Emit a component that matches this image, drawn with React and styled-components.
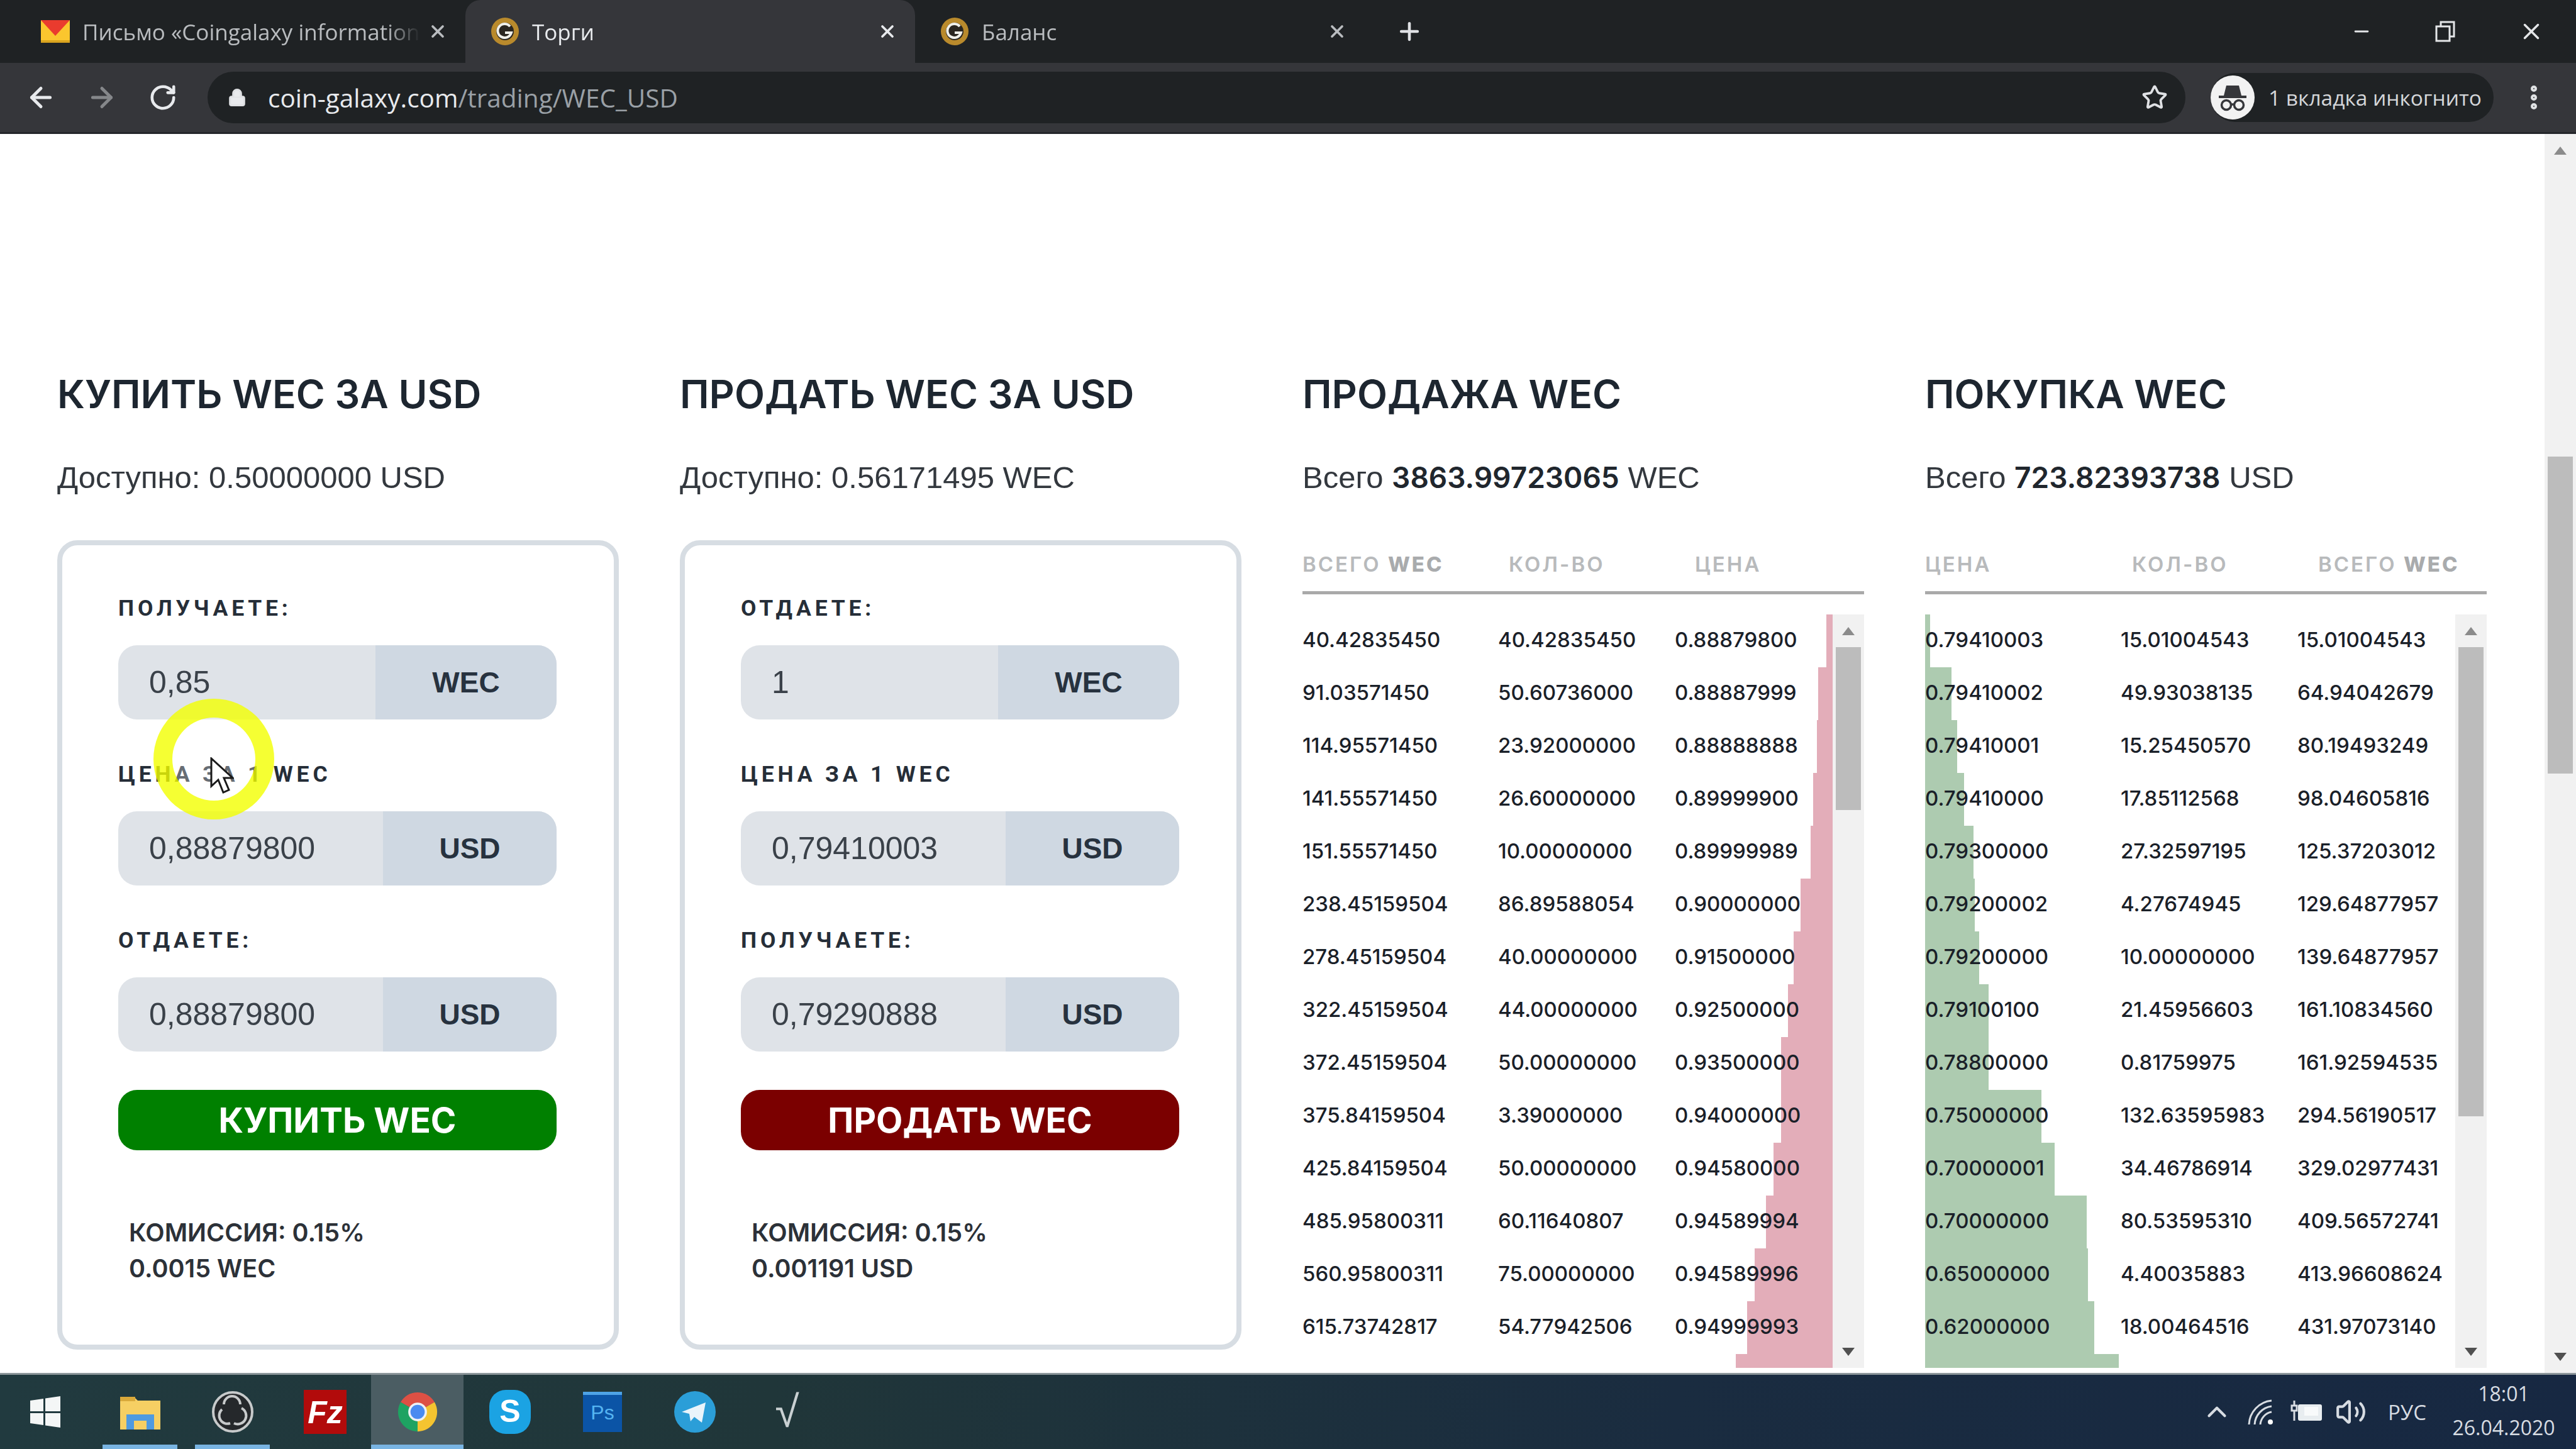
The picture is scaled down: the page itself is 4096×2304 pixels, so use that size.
import styled, { createGlobalStyle } from "styled-components";
import { ArrowLeft, ArrowRight, RotateCw, Lock, Star, X, Plus, Minus, MoreVertical, ChevronUp, Volume2 } from "lucide-react";

const GlobalStyle = createGlobalStyle`
  html, body {
    margin: 0;
    padding: 0;
    background: #fff;
    overflow: hidden;
  }
  * { box-sizing: border-box; }
`;

const Screen = styled.div`
  position: relative;
  width: 4096px;
  height: 2304px;
  display: flex;
  flex-direction: column;
  overflow: hidden;
  font-family: "Liberation Sans", Arial, sans-serif;
  background: #fff;
`;

/* browser chrome */
const TabStrip = styled.div`
  height: 100px;
  flex: none;
  display: flex;
  padding-left: 25px;
  background: #1f2224;
`;

const Tab = styled.div`
  width: 715px;
  height: 100px;
  display: flex;
  align-items: center;
  padding: 0 28px 0 40px;
  border-radius: 24px 24px 0 0;
  background: ${(p) => (p.$active ? "#35363a" : "transparent")};
  color: ${(p) => (p.$active ? "#e8eaed" : "#b9bcbf")};
`;

const Favicon = styled.svg`
  width: 46px;
  height: 46px;
  flex: none;
`;

const TabTitle = styled.span`
  flex: 1;
  margin: 0 12px 0 20px;
  font-family: "Open Sans", sans-serif;
  font-size: 35px;
  white-space: nowrap;
  overflow: hidden;
  -webkit-mask-image: linear-gradient(to right, #000 90%, transparent 100%);
`;

const NewTab = styled.div`
  width: 142px;
  height: 100px;
  display: flex;
  align-items: center;
  justify-content: center;
  color: #dfe1e4;
`;

const WindowControls = styled.div`
  margin-left: auto;
  display: flex;
  align-items: center;
  gap: 100px;
  padding-right: 50px;
  color: #e4e6e8;
`;

const Toolbar = styled.div`
  height: 113px;
  flex: none;
  display: flex;
  align-items: center;
  padding: 0 0 0 16px;
  background: #35363a;
  border-bottom: 3px solid #24262a;
  color: #dfe1e4;
`;

const NavButton = styled.div`
  width: 97px;
  display: flex;
  justify-content: center;
  color: ${(p) => (p.$muted ? "#85878a" : "#e8eaed")};
`;

const AddressBar = styled.div`
  flex: none;
  width: 3145px;
  height: 82px;
  margin-left: 23px;
  padding: 0 28px 0 32px;
  display: flex;
  align-items: center;
  border-radius: 41px;
  background: #1f2224;
`;

const UrlText = styled.span`
  margin-left: 34px;
  font-family: "Open Sans", sans-serif;
  font-size: 40.5px;
  color: #e8eaed;
  & > span { color: #9aa0a6; }
`;

const BookmarkStar = styled(Star)`
  margin-left: auto;
`;

const ProfilePill = styled.div`
  width: 450px;
  height: 78px;
  margin-left: 40px;
  display: flex;
  align-items: center;
  gap: 22px;
  border-radius: 39px;
  background: #1f2224;
  font-family: "Open Sans", sans-serif;
  font-size: 33.5px;
  font-weight: 500;
  color: #d4d6d9;
  white-space: nowrap;
`;

const MenuButton = styled.div`
  margin-left: 40px;
  display: flex;
  color: #e0e2e4;
`;

/* page */
const Viewport = styled.div`
  flex: 1;
  min-height: 0;
  display: flex;
  background: #fff;
`;

const Columns = styled.main`
  flex: 1;
  display: grid;
  grid-template-columns: repeat(4, 893px);
  column-gap: 97px;
  padding: 373px 0 0 91px;
  overflow: hidden;
`;

const Column = styled.section`
  display: flex;
  flex-direction: column;
  min-height: 0;
`;

const Title = styled.h2`
  margin: 0;
  height: 80px;
  line-height: 80px;
  font-family: Inter, sans-serif;
  font-size: 62.5px;
  font-weight: 600;
  color: #1d2630;
  white-space: nowrap;
`;

const Balance = styled.p`
  margin: 63px 0 0;
  height: 60px;
  line-height: 60px;
  font-size: 49px;
  color: #33383e;
  white-space: nowrap;
  & > b {
    font-family: Inter, sans-serif;
    font-size: 46px;
    font-weight: 600;
    color: #20262d;
  }
`;

const Card = styled.div`
  margin-top: 70px;
  width: 893px;
  height: 1287px;
  padding: 80px 91px 0 89px;
  border: 8px solid #d7dde3;
  border-radius: 32px;
  background: #fff;
`;

const FieldLabel = styled.div`
  height: 40px;
  line-height: 40px;
  font-family: Roboto, sans-serif;
  font-size: 35.5px;
  font-weight: 700;
  letter-spacing: 5.8px;
  color: #262e38;
  white-space: nowrap;
`;

const Field = styled.div`
  display: flex;
  height: 118px;
  margin: 39px 0 67px;
  border-radius: 30px;
  overflow: hidden;
  background: #dfe3e8;
`;

const FieldValue = styled.div`
  flex: 1;
  display: flex;
  align-items: center;
  padding-left: 49px;
  font-size: 50px;
  color: #3a4149;
`;

const FieldUnit = styled.div`
  width: ${(p) => (p.$wide ? "276px" : "288px")};
  display: flex;
  align-items: center;
  justify-content: center;
  background: #cfd8e2;
  font-size: 46px;
  font-weight: 700;
  color: #27323f;
`;

const SubmitButton = styled.button`
  display: block;
  width: 100%;
  height: 96px;
  margin-top: -6px;
  border: 0;
  border-radius: 30px;
  background: ${(p) => (p.$sell ? "#7b0000" : "#008000")};
  font-family: Inter, sans-serif;
  font-size: 55px;
  font-weight: 700;
  color: #fff;
`;

const Fee = styled.div`
  margin: 103px 0 0 17px;
  line-height: 57px;
  font-family: Inter, sans-serif;
  font-size: 39.5px;
  font-weight: 600;
  color: #2c3138;
  white-space: nowrap;
`;

/* order book */
const BookHead = styled.div`
  display: grid;
  grid-template-columns: ${(p) => p.$cols};
  height: 68px;
  margin-top: 88px;
  line-height: 40px;
  border-bottom: 5px solid #a9a9a9;
  font-family: Inter, sans-serif;
  font-size: 33px;
  font-weight: 600;
  letter-spacing: 3px;
  color: #b8babc;
  white-space: nowrap;
  & b { font-weight: 800; color: #a9abad; }
`;

const BookBody = styled.div`
  display: flex;
  height: 1198px;
  margin-top: 32px;
  overflow: hidden;
`;

const BookRows = styled.div`
  position: relative;
  flex: 1;
`;

const DepthLayer = styled.div`
  position: absolute;
  inset: 0;
  display: flex;
  flex-direction: column;
  align-items: ${(p) => (p.$side === "sell" ? "flex-end" : "flex-start")};
`;

const DepthBar = styled.div`
  flex: none;
  height: 84px;
  background: ${(p) => (p.$side === "sell" ? "#e3adb9" : "#adcbb0")};
`;

const RowList = styled.div`
  position: relative;
  display: flex;
  flex-direction: column;
  gap: 8px;
  padding-top: 2px;
`;

const BookRow = styled.div`
  display: grid;
  grid-template-columns: 311px 281px 1fr;
  height: 76px;
  align-items: center;
  font-family: Inter, sans-serif;
  font-size: 33px;
  font-weight: 550;
  color: #1a2028;
  white-space: nowrap;
`;

const ScrollTrack = styled.div`
  flex: none;
  width: 50px;
  height: 100%;
  display: flex;
  flex-direction: column;
  align-items: center;
  background: #f1f1f1;
`;

const ScrollArrow = styled.div`
  flex: none;
  height: 52px;
  display: flex;
  align-items: center;
  justify-content: center;
  margin-top: ${(p) => (p.$down ? "auto" : "0")};
  &::before {
    content: "";
    border-left: 10px solid transparent;
    border-right: 10px solid transparent;
    border-bottom: ${(p) => (p.$down ? "0" : "13px solid #8b8b8b")};
    border-top: ${(p) => (p.$down ? "13px solid #505050" : "0")};
  }
`;

const ScrollThumb = styled.div`
  flex: none;
  width: 40px;
  height: ${(p) => p.$height}px;
  margin-top: ${(p) => p.$offset}px;
  background: #bcbcbc;
`;

/* cursor highlight from the screen recorder */
const CursorRing = styled.div`
  position: absolute;
  left: 244px;
  top: 1111px;
  width: 192px;
  height: 192px;
  border: 30px solid rgba(242, 255, 0, 0.8);
  border-radius: 50%;
  background-clip: padding-box;
  background-color: rgba(255, 255, 255, 0.3);
`;

const CursorArrow = styled.svg`
  position: absolute;
  left: 334px;
  top: 1204px;
  width: 38px;
  height: 58px;
`;

/* taskbar */
const Taskbar = styled.footer`
  height: 121px;
  flex: none;
  display: flex;
  align-items: stretch;
  border-top: 3px solid #8d979b;
  background: linear-gradient(to right, #213a3f 0%, #203639 30%, #1a2c40 65%, #172842 100%);
`;

const StartCell = styled.div`
  width: 149px;
  display: flex;
  align-items: center;
  justify-content: center;
  padding-right: 6px;
`;

const TaskCell = styled.div`
  position: relative;
  width: 147px;
  display: flex;
  align-items: center;
  justify-content: center;
  background: ${(p) => (p.$active ? "#4b5d63" : "transparent")};
  &::after {
    content: "";
    display: ${(p) => (p.$open ? "block" : "none")};
    position: absolute;
    bottom: 0;
    left: ${(p) => (p.$active ? "0" : "14px")};
    right: ${(p) => (p.$active ? "0" : "14px")};
    height: 7px;
    background: #79b4e2;
  }
`;

const BadgeGlyph = styled.span`
  font-family: "Liberation Sans", sans-serif;
  font-size: 70px;
  color: #c9d0d2;
`;

const Tray = styled.div`
  margin-left: auto;
  display: flex;
  align-items: center;
  color: #d7dce2;
`;

const TrayItem = styled.div`
  width: 71px;
  display: flex;
  justify-content: center;
`;

const TrayLang = styled.span`
  margin-left: 23px;
  font-family: "Open Sans", sans-serif;
  font-size: 33px;
`;

const Clock = styled.div`
  width: 190px;
  margin: 0 20px 4px 28px;
  font-family: "Open Sans", sans-serif;
  font-size: 32px;
  line-height: 54px;
  text-align: center;
  white-space: nowrap;
`;

const sellRows = [
  ["40.42835450", "40.42835450", "0.88879800"],
  ["91.03571450", "50.60736000", "0.88887999"],
  ["114.95571450", "23.92000000", "0.88888888"],
  ["141.55571450", "26.60000000", "0.89999900"],
  ["151.55571450", "10.00000000", "0.89999989"],
  ["238.45159504", "86.89588054", "0.90000000"],
  ["278.45159504", "40.00000000", "0.91500000"],
  ["322.45159504", "44.00000000", "0.92500000"],
  ["372.45159504", "50.00000000", "0.93500000"],
  ["375.84159504", "3.39000000", "0.94000000"],
  ["425.84159504", "50.00000000", "0.94580000"],
  ["485.95800311", "60.11640807", "0.94589994"],
  ["560.95800311", "75.00000000", "0.94589996"],
  ["615.73742817", "54.77942506", "0.94999993"],
];

const buyRows = [
  ["0.79410003", "15.01004543", "15.01004543"],
  ["0.79410002", "49.93038135", "64.94042679"],
  ["0.79410001", "15.25450570", "80.19493249"],
  ["0.79410000", "17.85112568", "98.04605816"],
  ["0.79300000", "27.32597195", "125.37203012"],
  ["0.79200002", "4.27674945", "129.64877957"],
  ["0.79200000", "10.00000000", "139.64877957"],
  ["0.79100100", "21.45956603", "161.10834560"],
  ["0.78800000", "0.81759975", "161.92594535"],
  ["0.75000000", "132.63595983", "294.56190517"],
  ["0.70000001", "34.46786914", "329.02977431"],
  ["0.70000000", "80.53595310", "409.56572741"],
  ["0.65000000", "4.40035883", "413.96608624"],
  ["0.62000000", "18.00464516", "431.97073140"],
];

const sellDepth = [10, 23, 25, 31, 35, 51, 62, 71, 82, 82, 94, 106, 124, 136, 154];
const buyDepth = [8, 42, 51, 62, 77, 79, 86, 101, 101, 185, 206, 257, 259, 269, 308];

function MailIcon() {
  return (
    <Favicon viewBox="0 0 46 46">
      <rect x="0" y="5" width="46" height="36" fill="#fbc62e" />
      <path d="M0 5h46L23 30z" fill="#ea3b2e" />
      <rect x="0" y="37" width="46" height="4" fill="#d9a31f" />
    </Favicon>
  );
}

function CoinIcon() {
  return (
    <Favicon viewBox="0 0 46 46">
      <circle cx="23" cy="23" r="22" fill="#b98a2c" />
      <circle cx="23" cy="23" r="14" fill="#2a2620" />
      <path d="M31 15a11 11 0 1 0 2 10H23" fill="none" stroke="#f0f0ea" strokeWidth="4" />
    </Favicon>
  );
}

function RestoreIcon() {
  return (
    <svg width="32" height="34" viewBox="0 0 32 34" fill="none" stroke="currentColor" strokeWidth="3">
      <rect x="2" y="9" width="21" height="23" />
      <path d="M9 9V2h21v23h-7" />
    </svg>
  );
}

function IncognitoAvatar() {
  return (
    <svg width="70" height="70" viewBox="0 0 70 70">
      <circle cx="35" cy="35" r="35" fill="#f2f2f2" />
      <path d="M25 16h20l4 16H21z" fill="#35363a" />
      <rect x="13" y="32" width="44" height="4" fill="#35363a" />
      <g fill="none" stroke="#35363a" strokeWidth="3.5">
        <circle cx="25" cy="47" r="7.5" />
        <circle cx="45" cy="47" r="7.5" />
        <path d="M32 46h6" />
      </g>
    </svg>
  );
}

function Scrollbar({ thumbHeight, thumbOffset = 0 }) {
  return (
    <ScrollTrack>
      <ScrollArrow />
      <ScrollThumb $height={thumbHeight} $offset={thumbOffset} />
      <ScrollArrow $down />
    </ScrollTrack>
  );
}

function TradeCard({ fields, action, sell, fee }) {
  return (
    <Card>
      {fields.map((f) => (
        <div key={f.label}>
          <FieldLabel>{f.label}</FieldLabel>
          <Field>
            <FieldValue>{f.value}</FieldValue>
            <FieldUnit $wide={f.unit === "USD"}>{f.unit}</FieldUnit>
          </Field>
        </div>
      ))}
      <SubmitButton $sell={sell}>{action}</SubmitButton>
      <Fee>
        КОМИССИЯ: 0.15%
        <br />
        {fee}
      </Fee>
    </Card>
  );
}

function OrderBook({ side, head, cols, rows, depth, thumbHeight }) {
  return (
    <>
      <BookHead $cols={cols}>{head}</BookHead>
      <BookBody>
        <BookRows>
          <DepthLayer $side={side}>
            {depth.map((w, i) => (
              <DepthBar key={i} $side={side} style={{ width: w }} />
            ))}
          </DepthLayer>
          <RowList>
            {rows.map((r) => (
              <BookRow key={r[2]}>
                <span>{r[0]}</span>
                <span>{r[1]}</span>
                <span>{r[2]}</span>
              </BookRow>
            ))}
          </RowList>
        </BookRows>
        <Scrollbar thumbHeight={thumbHeight} />
      </BookBody>
    </>
  );
}

function Windows() {
  return (
    <svg width="48" height="50" viewBox="0 0 48 50" fill="#f4f6f6">
      <path d="M0 7l21-3v20H0zM24 3.500L48 0v24H24zM0 27h21v19L0 43zM24 27h24v23l-24-3.500z" />
    </svg>
  );
}

function Folder() {
  return (
    <svg width="64" height="56" viewBox="0 0 64 56">
      <path d="M0 4h22l6 6h36v46H0z" fill="#f6cf63" />
      <rect x="0" y="4" width="24" height="7" fill="#d9a93a" />
      <path d="M10 56V32h44v24H42V42H22v14z" fill="#4f9ae0" />
    </svg>
  );
}

function Obs() {
  return (
    <svg width="68" height="68" viewBox="0 0 68 68">
      <circle cx="34" cy="34" r="31" fill="#25282b" stroke="#c7cacb" strokeWidth="4" />
      <g fill="none" stroke="#c7cacb" strokeWidth="4">
        <path d="M20 22a13 13 0 0 1 26 0" />
        <path d="M48 28a13 13 0 0 1-12 24" />
        <path d="M30 52a13 13 0 0 1-13-22" />
      </g>
    </svg>
  );
}

function FileZilla() {
  return (
    <svg width="68" height="70" viewBox="0 0 68 70">
      <rect width="68" height="70" fill="#b20b0b" />
      <text x="34" y="53" textAnchor="middle" fontFamily="Liberation Sans, sans-serif" fontWeight="700" fontStyle="italic" fontSize="50" fill="#fff">Fz</text>
    </svg>
  );
}

function Chrome() {
  return (
    <svg width="68" height="68" viewBox="0 0 48 48">
      <path d="M24 24L5 13A22 22 0 0 1 43 13z" fill="#dd5044" />
      <path d="M24 24L43 13A22 22 0 0 1 24 46z" fill="#f4c430" />
      <path d="M24 24L24 46A22 22 0 0 1 5 13z" fill="#1ea362" />
      <circle cx="24" cy="24" r="10.500" fill="#eef1f4" />
      <circle cx="24" cy="24" r="8" fill="#4a8bf0" />
    </svg>
  );
}

function Skype() {
  return (
    <svg width="66" height="70" viewBox="0 0 66 70">
      <rect width="66" height="70" rx="26" fill="#1ba3e3" />
      <text x="33" y="51" textAnchor="middle" fontFamily="Liberation Sans, sans-serif" fontWeight="700" fontSize="50" fill="#fff">S</text>
    </svg>
  );
}

function Photoshop() {
  return (
    <svg width="62" height="64" viewBox="0 0 62 64">
      <rect width="62" height="64" fill="#0b54a6" />
      <rect width="62" height="5" fill="#4ea3e6" />
      <text x="31" y="44" textAnchor="middle" fontFamily="Liberation Sans, sans-serif" fontSize="32" fill="#55b4f2">Ps</text>
    </svg>
  );
}

function Telegram() {
  return (
    <svg width="66" height="66" viewBox="0 0 66 66">
      <circle cx="33" cy="33" r="33" fill="#2b9ed8" />
      <path d="M12 33l38-15-6 32-12-9-6 7-2-12z" fill="#e9f4fb" />
    </svg>
  );
}

function Wifi() {
  return (
    <svg width="44" height="44" viewBox="0 0 44 44" fill="none" stroke="currentColor" strokeWidth="3">
      <path d="M2 42A40 40 0 0 1 38 4" />
      <path d="M11 42A31 31 0 0 1 38 13" />
      <path d="M20 42A22 22 0 0 1 38 22" />
      <circle cx="36" cy="38" r="4" fill="#fff" stroke="none" />
    </svg>
  );
}

function Battery() {
  return (
    <svg width="54" height="44" viewBox="0 0 54 44">
      <rect x="14" y="10" width="38" height="26" rx="3" fill="#e8edf0" />
      <path d="M8 4v8M4 12h8v8H4zM8 20v16" fill="none" stroke="#d7dce2" strokeWidth="3" />
      <rect x="24" y="14" width="22" height="14" fill="#f8fafb" />
    </svg>
  );
}

export default function App() {
  return (
    <Screen>
      <GlobalStyle />
      <TabStrip>
        <Tab>
          <MailIcon />
          <TabTitle>Письмо «Coingalaxy information</TabTitle>
          <X size={32} strokeWidth={2.8} />
        </Tab>
        <Tab $active>
          <CoinIcon />
          <TabTitle>Торги</TabTitle>
          <X size={32} strokeWidth={2.8} />
        </Tab>
        <Tab>
          <CoinIcon />
          <TabTitle>Баланс</TabTitle>
          <X size={32} strokeWidth={2.8} />
        </Tab>
        <NewTab>
          <Plus size={44} strokeWidth={2.5} />
        </NewTab>
        <WindowControls>
          <Minus size={34} strokeWidth={2} />
          <RestoreIcon />
          <X size={42} strokeWidth={2} />
        </WindowControls>
      </TabStrip>

      <Toolbar>
        <NavButton>
          <ArrowLeft size={50} strokeWidth={2.4} />
        </NavButton>
        <NavButton $muted>
          <ArrowRight size={50} strokeWidth={2.4} />
        </NavButton>
        <NavButton>
          <RotateCw size={46} strokeWidth={2.4} />
        </NavButton>
        <AddressBar>
          <Lock size={30} fill="#e8eaed" strokeWidth={2.5} />
          <UrlText>
            coin-galaxy.com<span>/trading/WEC_USD</span>
          </UrlText>
          <BookmarkStar size={42} strokeWidth={2.2} />
        </AddressBar>
        <ProfilePill>
          <IncognitoAvatar />
          1 вкладка инкогнито
        </ProfilePill>
        <MenuButton>
          <MoreVertical size={48} strokeWidth={3} />
        </MenuButton>
      </Toolbar>

      <Viewport>
        <Columns>
          <Column>
            <Title>КУПИТЬ WEC ЗА USD</Title>
            <Balance>Доступно: 0.50000000 USD</Balance>
            <TradeCard
              fields={[
                { label: "ПОЛУЧАЕТЕ:", value: "0,85", unit: "WEC" },
                { label: "ЦЕНА ЗА 1 WEC", value: "0,88879800", unit: "USD" },
                { label: "ОТДАЕТЕ:", value: "0,88879800", unit: "USD" },
              ]}
              action="КУПИТЬ WEC"
              fee="0.0015 WEC"
            />
          </Column>
          <Column>
            <Title>ПРОДАТЬ WEC ЗА USD</Title>
            <Balance>Доступно: 0.56171495 WEC</Balance>
            <TradeCard
              fields={[
                { label: "ОТДАЕТЕ:", value: "1", unit: "WEC" },
                { label: "ЦЕНА ЗА 1 WEC", value: "0,79410003", unit: "USD" },
                { label: "ПОЛУЧАЕТЕ:", value: "0,79290888", unit: "USD" },
              ]}
              action="ПРОДАТЬ WEC"
              sell
              fee="0.001191 USD"
            />
          </Column>
          <Column>
            <Title>ПРОДАЖА WEC</Title>
            <Balance>
              Всего <b>3863.99723065</b> WEC
            </Balance>
            <OrderBook
              side="sell"
              cols="328px 296px 1fr"
              head={
                <>
                  <span>
                    ВСЕГО <b>WEC</b>
                  </span>
                  <span>КОЛ-ВО</span>
                  <span>ЦЕНА</span>
                </>
              }
              rows={sellRows}
              depth={sellDepth}
              thumbHeight={259}
            />
          </Column>
          <Column>
            <Title>ПОКУПКА WEC</Title>
            <Balance>
              Всего <b>723.82393738</b> USD
            </Balance>
            <OrderBook
              side="buy"
              cols="329px 296px 1fr"
              head={
                <>
                  <span>ЦЕНА</span>
                  <span>КОЛ-ВО</span>
                  <span>
                    ВСЕГО <b>WEC</b>
                  </span>
                </>
              }
              rows={buyRows}
              depth={buyDepth}
              thumbHeight={746}
            />
          </Column>
        </Columns>
        <Scrollbar thumbHeight={504} thumbOffset={461} />
      </Viewport>

      <Taskbar>
        <StartCell>
          <Windows />
        </StartCell>
        <TaskCell $open>
          <Folder />
        </TaskCell>
        <TaskCell $open>
          <Obs />
        </TaskCell>
        <TaskCell>
          <FileZilla />
        </TaskCell>
        <TaskCell $active $open>
          <Chrome />
        </TaskCell>
        <TaskCell>
          <Skype />
        </TaskCell>
        <TaskCell>
          <Photoshop />
        </TaskCell>
        <TaskCell>
          <Telegram />
        </TaskCell>
        <TaskCell>
          <BadgeGlyph>√</BadgeGlyph>
        </TaskCell>
        <Tray>
          <TrayItem>
            <ChevronUp size={50} strokeWidth={2} />
          </TrayItem>
          <TrayItem>
            <Wifi />
          </TrayItem>
          <TrayItem>
            <Battery />
          </TrayItem>
          <TrayItem>
            <Volume2 size={50} strokeWidth={2} />
          </TrayItem>
          <TrayLang>РУС</TrayLang>
          <Clock>
            18:01
            <br />
            26.04.2020
          </Clock>
        </Tray>
      </Taskbar>

      <CursorRing />
      <CursorArrow viewBox="0 0 38 58">
        <path d="M2 2v44l11-10 8 20 9-4-8-19h14z" fill="#fff" stroke="#1a1a1a" strokeWidth="3" />
      </CursorArrow>
    </Screen>
  );
}
